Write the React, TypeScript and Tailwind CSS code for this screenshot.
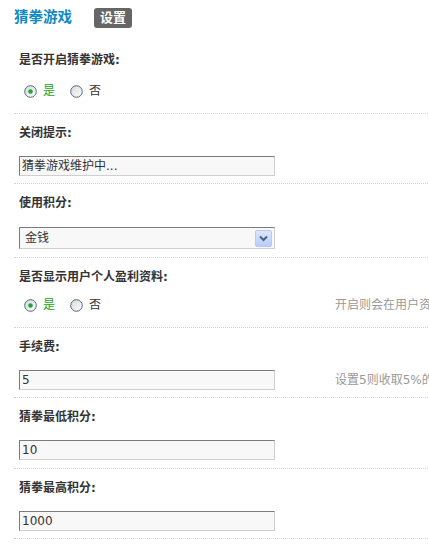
import React from 'react';

const FONT = "font-['DejaVu_Sans','Noto_Sans_CJK_SC',sans-serif]";

function Radio({ checked }: { checked?: boolean }) {
  return (
    <svg width="13" height="13" viewBox="0 0 13 13" className="shrink-0">
      <defs>
        <linearGradient id={checked ? 'rg1' : 'rg2'} x1="0" y1="0" x2="1" y2="1">
          <stop offset="0" stopColor="#d8d8d2" />
          <stop offset="1" stopColor="#ffffff" />
        </linearGradient>
      </defs>
      <circle cx="6.5" cy="6.5" r="5.8" fill={`url(#${checked ? 'rg1' : 'rg2'})`} stroke="#4b6a8a" strokeWidth="1" />
      {checked && <circle cx="6.5" cy="6.5" r="2.3" fill="#22a33a" />}
    </svg>
  );
}

function RadioRow() {
  return (
    <div className="flex items-center h-[18px] pl-[10px] text-[12px]">
      <Radio checked />
      <span className="ml-[6px] text-[#19a319]">是</span>
      <span className="ml-[15px]"><Radio /></span>
      <span className="ml-[6px] text-[#333]">否</span>
    </div>
  );
}

function TextBox({ value }: { value: string }) {
  return (
    <div className="ml-[5px] w-[256px] h-[20px] border border-t-[#7b7b7b] border-l-[#7b7b7b] border-r-[#cfcfcf] border-b-[#cfcfcf] bg-[#f8f8f8] pl-[2px] text-[12px] leading-[18px] text-[#333] whitespace-nowrap overflow-hidden">
      {value}
    </div>
  );
}

function SelectBox({ value }: { value: string }) {
  return (
    <div className="ml-[5px] w-[256px] h-[22px] border border-t-[#7b7b7b] border-l-[#7b7b7b] border-r-[#cfcfcf] border-b-[#cfcfcf] bg-[#f8f8f8] flex items-center justify-between pl-[5px] pr-[2px] text-[12px] text-[#333]">
      <span>{value}</span>
      <div className="w-[17px] h-[17px] rounded-[2px] border border-[#b9c9ee] bg-gradient-to-b from-[#dbe6fd] to-[#b8ccf8] flex items-center justify-center">
        <svg width="9" height="7" viewBox="0 0 9 7">
          <path d="M1 1.5 L4.5 5 L8 1.5" fill="none" stroke="#4d6185" strokeWidth="2" />
        </svg>
      </div>
    </div>
  );
}

function Section({
  label,
  children,
  hint,
  first,
  last,
  gap = 'mt-[14px]',
  pb = 'pb-[7px]',
}: {
  label: string;
  children: React.ReactNode;
  hint?: string;
  first?: boolean;
  last?: boolean;
  gap?: string;
  pb?: string;
}) {
  return (
    <div
      className={`border-t border-dotted ${first ? 'border-t-transparent' : 'border-t-[#d4d4d4]'} ${
        last ? 'border-b border-b-[#d4d4d4]' : ''
      } pt-[10px] ${pb}`}
    >
      <div className="pl-[5px] h-[18px] leading-[18px] text-[12px] font-bold text-[#333]">{label}</div>
      <div className={`flex items-center ${gap}`}>
        <div className="w-[321px] shrink-0">{children}</div>
        {hint && <div className="text-[12px] text-[#999] whitespace-nowrap">{hint}</div>}
      </div>
    </div>
  );
}

export default function App() {
  return (
    <div className={`w-[429px] h-[547px] overflow-hidden bg-white ${FONT}`}>
      <div className="flex items-center h-[20px] mt-[8px] pl-[14px]">
        <span className="text-[14.5px] font-bold text-[#0d8ac4]">猜拳游戏</span>
        <span className="ml-[22px] h-[20px] w-[38px] rounded-[3px] bg-[#666] text-white text-[13px] font-bold flex items-center justify-center">
          设置
        </span>
      </div>

      <div className="mt-[12px] ml-[14px] w-[700px]">
        <Section label="是否开启猜拳游戏:" first gap="mt-[13px]" pb="pb-[13px]">
          <RadioRow />
        </Section>
        <Section label="关闭提示:">
          <TextBox value="猜拳游戏维护中..." />
        </Section>
        <Section label="使用积分:" gap="mt-[15px]" pb="pb-[8px]">
          <SelectBox value="金钱" />
        </Section>
        <Section label="是否显示用户个人盈利资料:" hint="开启则会在用户资料页面显示其猜拳盈利情况" gap="mt-[10px]" pb="pb-[13px]">
          <RadioRow />
        </Section>
        <Section label="手续费:" hint="设置5则收取5%的手续费">
          <TextBox value="5" />
        </Section>
        <Section label="猜拳最低积分:" pb="pb-[8px]">
          <TextBox value="10" />
        </Section>
        <Section label="猜拳最高积分:" pb="pb-[7px]" last>
          <TextBox value="1000" />
        </Section>
      </div>
    </div>
  );
}
